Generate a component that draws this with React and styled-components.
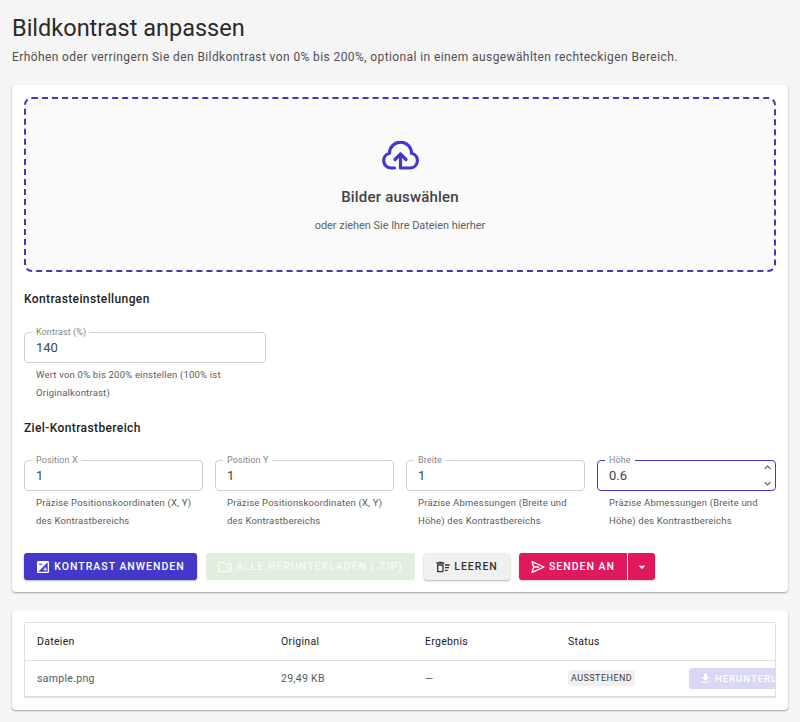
import React from "react";
import styled, { createGlobalStyle } from "styled-components";
import {
  MdExposure,
  MdOutlineFolderZip,
  MdOutlineDeleteSweep,
  MdArrowDropDown,
  MdFileDownload,
  MdKeyboardArrowUp,
  MdKeyboardArrowDown,
} from "react-icons/md";

const Global = createGlobalStyle`
  html, body { margin: 0; padding: 0; background: #f5f5f5; }
  body { font-family: Roboto, "Liberation Sans", sans-serif; color: #212121; }
  * { box-sizing: border-box; }
`;

const Page = styled.div`
  width: 800px;
  height: 722px;
  padding: 14px 12px 0;
  overflow: hidden;
`;
const Title = styled.h1`
  margin: 0;
  font-size: 23.5px;
  line-height: 29px;
  font-weight: 400;
  color: #2a2a2a;
`;
const Subtitle = styled.p`
  margin: 6px 0 0;
  font-size: 12px;
  line-height: 17px;
  letter-spacing: 0.4px;
  color: #4f4f4f;
`;
const Card = styled.section`
  margin-top: ${(p) => p.$top}px;
  padding: 12px;
  background: #fff;
  border-radius: 4px;
  box-shadow: 0 1px 2px rgba(0, 0, 0, 0.35);
`;
const Dropzone = styled.div`
  height: 175px;
  border: 2px dashed #4338b8;
  border-radius: 8px;
  background: #fafafa;
  display: flex;
  flex-direction: column;
  align-items: center;
  padding-top: 42px;
`;
const CloudSvg = styled.svg`
  width: 39px;
  height: 30px;
  display: block;
  fill: none;
  stroke: #4338ca;
  stroke-width: 3.2;
  stroke-linecap: round;
  stroke-linejoin: round;
`;
const DropTitle = styled.div`
  margin-top: 16px;
  font-size: 15px;
  line-height: 20px;
  font-weight: 500;
  letter-spacing: 0.2px;
  color: #424242;
`;
const DropHint = styled.div`
  margin-top: 11px;
  font-size: 10.9px;
  line-height: 16px;
  color: #616161;
`;
const Section = styled.h2`
  margin: ${(p) => p.$top}px 0 0;
  font-size: 12px;
  line-height: 16px;
  font-weight: 500;
  letter-spacing: 0.38px;
  color: #212121;
`;
const Narrow = styled.div`
  width: 242px;
  margin-top: 25px;
`;
const FieldGrid = styled.div`
  display: grid;
  grid-template-columns: repeat(4, 1fr);
  gap: 12px;
  margin-top: 24px;
`;
const Box = styled.div`
  position: relative;
  height: 31px;
  border: ${(p) => (p.$focus ? "1.5px solid #4338ca" : "1px solid #cfcfcf")};
  border-radius: 4px;
  background: #fff;
  display: flex;
  align-items: center;
  padding: 0 11px;
`;
const Legend = styled.label`
  position: absolute;
  top: -6px;
  left: 7px;
  padding: 0 4px;
  background: #fff;
  font-size: 9px;
  line-height: 10px;
  letter-spacing: 0.1px;
  color: #858585;
`;
const Input = styled.input`
  width: 100%;
  border: 0;
  padding: 0;
  margin-top: 1px;
  outline: none;
  background: transparent;
  font: 400 13px/16px Roboto, sans-serif;
  color: #444;
`;
const Spinner = styled.div`
  position: absolute;
  right: 1px;
  top: 0;
  bottom: 0;
  display: flex;
  flex-direction: column;
  justify-content: center;
  font-size: 13px;
  color: #555;
  svg { display: block; margin: 0; }
  svg + svg { margin-top: 3px; }
`;
const Help = styled.div`
  margin-top: 3px;
  padding: 0 8px 0 12px;
  font-size: 9.5px;
  line-height: 18px;
  letter-spacing: 0.2px;
  color: #5a5a5a;
`;
const Actions = styled.div`
  display: flex;
  align-items: center;
  gap: 9px;
  margin-top: 23px;
`;
const Button = styled.button`
  display: inline-flex;
  align-items: center;
  justify-content: center;
  gap: 4px;
  width: ${(p) => p.$w}px;
  height: 27px;
  padding: 1px 0 0;
  border: 0;
  border-radius: 3px;
  font: 500 10.5px/1 Roboto, sans-serif;
  letter-spacing: 1px;
  text-transform: uppercase;
  white-space: nowrap;
  color: ${(p) => p.$fg || "#fff"};
  background: ${(p) => p.$bg};
  box-shadow: ${(p) => (p.$flat ? "none" : "0 1px 2px rgba(0,0,0,.3)")};
  svg { font-size: 16px; margin: -1px -1px 0; flex: none; }
`;
const SendSvg = styled.svg`
  width: 16px;
  height: 16px;
  fill: none;
  stroke: currentColor;
  stroke-width: 2;
  stroke-linejoin: round;
  stroke-linecap: round;
`;
const SplitGroup = styled.div`
  display: inline-flex;
  border-radius: 3px;
  box-shadow: 0 1px 2px rgba(0, 0, 0, 0.2);
`;
const SplitMain = styled(Button)`
  border-radius: 3px 0 0 3px;
  box-shadow: none;
  border-right: 1px solid #fff;
`;
const SplitCaret = styled(Button)`
  border-radius: 0 3px 3px 0;
  box-shadow: none;
`;
const TableWrap = styled.div`
  width: 752px;
  overflow: hidden;
  border: 1px solid #e0e0e0;
  border-bottom-width: 2px;
  border-radius: 1px;
`;
const Table = styled.table`
  width: 840px;
  table-layout: fixed;
  border-collapse: collapse;
`;
const Th = styled.th`
  height: 37px;
  padding: 0 12px;
  text-align: left;
  font-size: 10.5px;
  font-weight: 400;
  letter-spacing: 0.3px;
  color: #212121;
  border-bottom: 1px solid #e0e0e0;
`;
const Td = styled.td`
  height: 36px;
  padding: 0 12px;
  font-size: 10.5px;
  letter-spacing: 0.3px;
  color: #5a5a5a;
  white-space: nowrap;
`;
const Chip = styled.span`
  display: inline-block;
  padding: 0 3px;
  height: 16px;
  border-radius: 4px;
  background: #f0f0f0;
  font-size: 9px;
  font-weight: 400;
  line-height: 16px;
  letter-spacing: 0.45px;
  color: #424242;
`;
const RowButton = styled(Button)`
  justify-content: flex-start;
  height: 21px;
  padding: 0 0 0 10px;
  font-size: 9.5px;
  box-shadow: none;
  gap: 3px;
  svg { font-size: 13px; margin: 0; }
`;

const CloudUpload = () => (
  <CloudSvg viewBox="0 0 38 30" aria-hidden="true">
    <path d="M13 27H9.5A7.5 7.5 0 0 1 8 12.2A11 11 0 0 1 30 12.2A7.5 7.5 0 0 1 29 27H19V13" />
    <path d="M13.5 18.5L19 13L24.5 18.5" />
  </CloudSvg>
);

const SendOutline = () => (
  <SendSvg viewBox="0 0 24 24" aria-hidden="true">
    <path d="M3 4L21 12L3 20L5.5 12Z" />
    <path d="M5.5 12H13" />
  </SendSvg>
);

const NumberField = ({ label, value, help, focus }) => (
  <div>
    <Box $focus={focus}>
      <Legend>{label}</Legend>
      <Input readOnly value={value} aria-label={label} />
      {focus && (
        <Spinner>
          <MdKeyboardArrowUp />
          <MdKeyboardArrowDown />
        </Spinner>
      )}
    </Box>
    <Help>{help}</Help>
  </div>
);

const POS = "Präzise Positionskoordinaten (X, Y) des Kontrastbereichs";
const DIM = "Präzise Abmessungen (Breite und Höhe) des Kontrastbereichs";

export default function App() {
  return (
    <Page>
      <Global />
      <Title>Bildkontrast anpassen</Title>
      <Subtitle>
        Erhöhen oder verringern Sie den Bildkontrast von 0% bis 200%, optional in einem ausgewählten rechteckigen Bereich.
      </Subtitle>
      <Card $top={19}>
        <Dropzone>
          <CloudUpload />
          <DropTitle>Bilder auswählen</DropTitle>
          <DropHint>oder ziehen Sie Ihre Dateien hierher</DropHint>
        </Dropzone>
        <Section $top={19}>Kontrasteinstellungen</Section>
        <Narrow>
          <NumberField
            label="Kontrast (%)"
            value="140"
            help="Wert von 0% bis 200% einstellen (100% ist Originalkontrast)"
          />
        </Narrow>
        <Section $top={18}>Ziel-Kontrastbereich</Section>
        <FieldGrid>
          <NumberField label="Position X" value="1" help={POS} />
          <NumberField label="Position Y" value="1" help={POS} />
          <NumberField label="Breite" value="1" help={DIM} />
          <NumberField label="Höhe" value="0.6" help={DIM} focus />
        </FieldGrid>
        <Actions>
          <Button $w={173} $bg="#4338ca">
            <MdExposure />
            Kontrast anwenden
          </Button>
          <Button $w={209} $bg="#dfeedf" $fg="#f7fbf7" $flat>
            <MdOutlineFolderZip />
            Alle herunterladen (.zip)
          </Button>
          <Button $w={86} $bg="#f0f0f0" $fg="#333">
            <MdOutlineDeleteSweep />
            Leeren
          </Button>
          <SplitGroup>
            <SplitMain $w={109} $bg="#e0195f">
              <SendOutline />
              Senden an
            </SplitMain>
            <SplitCaret $w={27} $bg="#e0195f">
              <MdArrowDropDown />
            </SplitCaret>
          </SplitGroup>
        </Actions>
      </Card>
      <Card $top={18}>
        <TableWrap>
          <Table>
            <colgroup>
              <col style={{ width: 244 }} />
              <col style={{ width: 144 }} />
              <col style={{ width: 143 }} />
              <col style={{ width: 121 }} />
              <col style={{ width: 188 }} />
            </colgroup>
            <thead>
              <tr>
                <Th>Dateien</Th>
                <Th>Original</Th>
                <Th>Ergebnis</Th>
                <Th>Status</Th>
                <Th />
              </tr>
            </thead>
            <tbody>
              <tr>
                <Td>sample.png</Td>
                <Td>29,49 KB</Td>
                <Td>—</Td>
                <Td>
                  <Chip>AUSSTEHEND</Chip>
                </Td>
                <Td>
                  <RowButton $w={120} $bg="#d9d7f4">
                    <MdFileDownload />
                    Herunterladen
                  </RowButton>
                </Td>
              </tr>
            </tbody>
          </Table>
        </TableWrap>
      </Card>
    </Page>
  );
}
